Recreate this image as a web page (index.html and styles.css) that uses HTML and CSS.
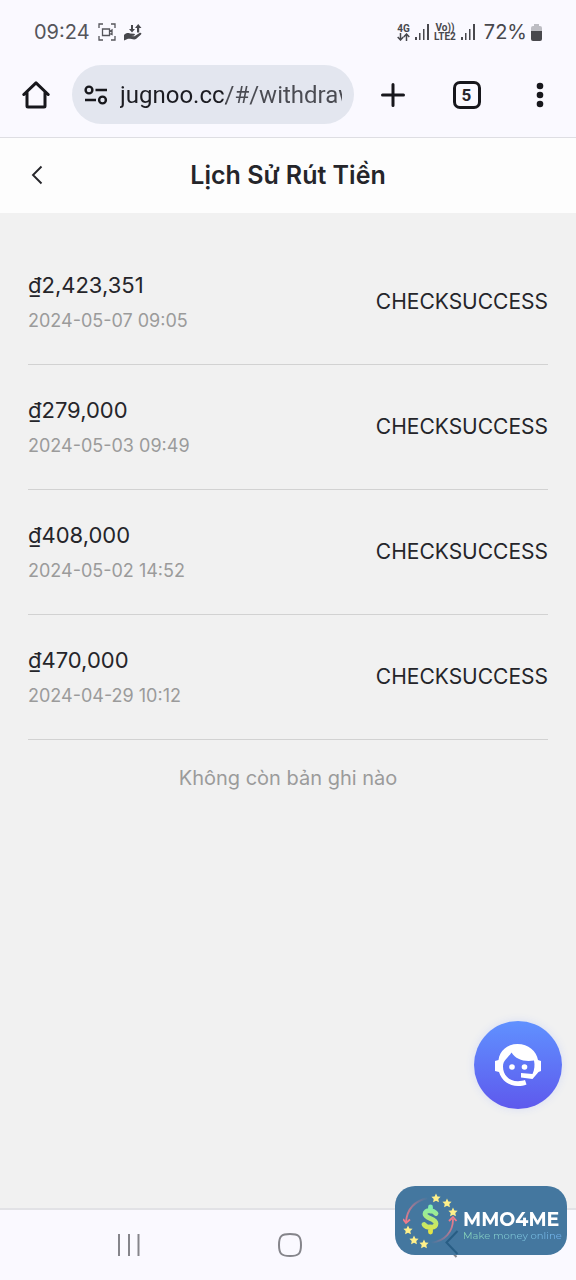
FILE: index.html
```html
<!DOCTYPE html>
<html lang="vi">
<head>
<meta charset="utf-8">
<meta name="viewport" content="width=device-width, initial-scale=1">
<title>Lịch Sử Rút Tiền</title>
<link rel="stylesheet" href="styles.css">
</head>
<body>
<div class="screen">
  <div class="status">
    <div class="status-group">
      <span class="clock">09:24</span>
      <svg class="status-icon" width="18" height="18" viewBox="0 0 18 18" fill="none" stroke="#55555b" stroke-width="1.3">
        <path d="M1 5V1h4M13 1h4v4M17 13v4h-4M5 17H1v-4"/>
        <path d="M4.500 6h7v6.500h-7zM11.500 8.500l2.500-1.500v4.500L11.500 10.500"/>
      </svg>
      <svg class="status-icon" width="18" height="18" viewBox="0 0 18 18" fill="#48484d">
        <path d="M7 2h2v4h2L8 9.500 5 6h2zM13 9.500V5h-2l3.200-4L17.500 5h-2.300v4.500z"/>
        <path d="M0 12c2-2 4-2.500 6-1.500l4 .3c1.500.2 1 1.700-.3 1.900L7 13l3.500.3L15.500 10c1.500-.7 2.500.5 1.500 1.500L12 16c-2 1.200-5-.5-8-.2l-4 1.700z"/>
      </svg>
    </div>
    <div class="status-group status-right">
      <span class="net">4G
        <svg width="13" height="8" viewBox="0 0 13 8" fill="none" stroke="#48484d" stroke-width="1.500"><path d="M3.500 0v6.800M.7 4l2.800 3 2.800-3M9.500 8V1.200M6.700 4l2.800-3 2.800 3"/></svg>
      </span>
      <svg width="16" height="16" viewBox="0 0 16 16" fill="#48484d"><path d="M1 13h2v3H1zM5 9h1.500v7H5zM9 5h1.500v11H9zM13 0h2v16h-2z"/></svg>
      <span class="net"><span>Vo))</span><span>LTE2</span></span>
      <svg width="16" height="16" viewBox="0 0 16 16" fill="#48484d"><path d="M1 13h2v3H1zM5 9h1.500v7H5zM9 5h1.500v11H9zM13 0h2v16h-2z"/></svg>
      <span class="percent">72%</span>
      <svg width="11" height="17" viewBox="0 0 11 17"><path d="M3 0h5v2h1q2 0 2 2v3H0V4q0-2 2-2h1z" fill="#bdbdc3"/><path d="M0 7h11v8q0 2-2 2H2q-2 0-2-2z" fill="#48484d"/></svg>
    </div>
  </div>

  <div class="toolbar">
    <button class="tool" type="button" aria-label="Home">
      <svg width="28" height="28" viewBox="0 0 28 28" fill="none" stroke="#17171c" stroke-width="3" stroke-linejoin="round" stroke-linecap="round"><path d="M1.800 13.500 14 1.800l12.200 11.700M5 11v14q0 1 1 1h16q1 0 1-1V11"/></svg>
    </button>
    <label class="address">
      <svg class="tune" width="24" height="20" viewBox="0 0 24 20" fill="none" stroke="#17171c" stroke-width="2.400"><circle cx="5" cy="5" r="3.400"/><path d="M11.500 5H23M1 15h11"/><circle cx="18.500" cy="15" r="3.400"/></svg>
      <input class="url" type="text" aria-label="URL" value="jugnoo.cc/#/withdraw">
    </label>
    <div class="actions">
      <button class="tool" type="button" aria-label="New tab">
        <svg width="24" height="24" viewBox="0 0 24 24" stroke="#17171c" stroke-width="3" stroke-linecap="round"><path d="M12 1.500v21M1.500 12h21"/></svg>
      </button>
      <button class="tool tabs" type="button" aria-label="Tabs">5</button>
      <button class="tool" type="button" aria-label="Menu">
        <svg width="8" height="26" viewBox="0 0 8 26" fill="#17171c"><circle cx="4" cy="4" r="3.300"/><circle cx="4" cy="13" r="3.300"/><circle cx="4" cy="22" r="3.300"/></svg>
      </button>
    </div>
  </div>

  <header class="header">
    <button class="back" type="button" aria-label="Back">
      <svg width="12" height="20" viewBox="0 0 12 20" fill="none" stroke="#25252a" stroke-width="1.900"><path d="M10.500 1.500 2 10l8.500 8.500"/></svg>
    </button>
    <h1 class="title">Lịch Sử Rút Tiền</h1>
  </header>

  <main class="content">
    <ul class="records">
      <li class="record"><div class="details"><span class="amount">₫2,423,351</span><time class="date">2024-05-07 09:05</time></div><span class="state">CHECKSUCCESS</span></li>
      <li class="record"><div class="details"><span class="amount">₫279,000</span><time class="date">2024-05-03 09:49</time></div><span class="state">CHECKSUCCESS</span></li>
      <li class="record"><div class="details"><span class="amount">₫408,000</span><time class="date">2024-05-02 14:52</time></div><span class="state">CHECKSUCCESS</span></li>
      <li class="record"><div class="details"><span class="amount">₫470,000</span><time class="date">2024-04-29 10:12</time></div><span class="state">CHECKSUCCESS</span></li>
    </ul>
    <p class="empty">Không còn bản ghi nào</p>
  </main>

  <nav class="navbar">
    <button class="nav" type="button" aria-label="Recent apps">
      <svg width="24" height="24" viewBox="0 0 24 24" stroke="#85858b" stroke-width="2"><path d="M2 1v22M12 1v22M21.500 1v22"/></svg>
    </button>
    <button class="nav" type="button" aria-label="Home screen">
      <svg width="26" height="26" viewBox="0 0 26 26" fill="none" stroke="#85858b" stroke-width="2"><path d="M13 2c8.500 0 11 2 11 11s-2.500 11-11 11S2 22 2 13 4.500 2 13 2z"/></svg>
    </button>
    <button class="nav" type="button" aria-label="Go back">
      <svg width="14" height="25" viewBox="0 0 14 25" fill="none" stroke="#85858b" stroke-width="2"><path d="M12.500 1 1.500 12.500l11 11.500"/></svg>
    </button>
  </nav>
</div>

<button class="support" type="button" aria-label="Support">
  <svg width="48" height="44" viewBox="0 0 48 44">
    <path d="M23.500 1C13 1 5.500 8 4.500 17L1 18v10l4 1c2.500 8.500 10 14 19 14 3 0 6-.5 8.500-1.500L31 37c-2 .7-4.500 1.200-7 1.200C14.500 38.200 9 31.500 9 23.500c0-6.500 5-8.500 8.500-14C22 16.500 30 19 40 17.500c1 4.500.5 9-1.500 13.500L27 30v4.500l11.500 1.500 6-7L47 28V18l-3-1C42.500 8 34.500 1 23.500 1z" fill="#fff"/>
    <circle cx="18" cy="24" r="2.800" fill="#fff"/><circle cx="30.500" cy="24" r="2.800" fill="#fff"/>
  </svg>
</button>

<a class="badge" href="#">
  <svg class="badge-logo" width="56" height="56" viewBox="0 0 56 56">
    <defs>
      <linearGradient id="dollar" gradientUnits="userSpaceOnUse" x1="0" y1="12" x2="0" y2="40"><stop offset="0" stop-color="#7df0b6"/><stop offset="1" stop-color="#e6e342"/></linearGradient>
      <linearGradient id="arc-left" x1="1" y1="0" x2="0" y2="1"><stop offset="0" stop-color="#e87a8b" stop-opacity="0"/><stop offset="1" stop-color="#f07c8b"/></linearGradient>
      <linearGradient id="arc-right" x1="0" y1="1" x2="1" y2="0"><stop offset="0" stop-color="#e87a8b" stop-opacity="0"/><stop offset="1" stop-color="#f07c8b"/></linearGradient>
      <path id="star" d="m0-4.500 1.400 2.900 3.200.4-2.300 2.200.6 3.200L0 2.700l-2.900 1.500.6-3.200-2.300-2.200 3.200-.4z" fill="#fff08a"/>
    </defs>
    <g fill="none" stroke-width="1.800">
      <path d="M25 5C11 8 4 17 3 29" stroke="url(#arc-left)"/><path d="m0 26 3 4 4-3.500" stroke="#f07c8b"/>
      <path d="M28 50C42 48 50 39 50 26" stroke="url(#arc-right)"/><path d="m46 28 4-4 3.500 4" stroke="#f07c8b"/>
    </g>
    <use href="#star" x="33" y="5"/><use href="#star" x="44" y="10"/><use href="#star" x="50" y="19"/>
    <use href="#star" x="5" y="37"/><use href="#star" x="11" y="47"/><use href="#star" x="21" y="51"/>
    <path d="M33 20.500c-3-4-11-4-11 .5s11 4.500 11 9.500-9 5-12 1M27.500 14v4M27.500 34v5" fill="none" stroke="url(#dollar)" stroke-width="4.800" stroke-linecap="round"/>
  </svg>
  <span class="badge-text"><strong class="brand">MMO4ME</strong><span class="slogan">Make money online</span></span>
  <svg class="badge-chevron" width="14" height="25" viewBox="0 0 14 25" fill="none" stroke="#285d84" stroke-width="2"><path d="M12.500 1 1.500 12.500l11 11.500"/></svg>
</a>
</body>
</html>
```
FILE: styles.css
```css
* { box-sizing: border-box; }
body { margin: 0; background: #f1f1f1; color: #25252a; font-family: Inter, "Noto Sans", sans-serif; }
button { border: 0; padding: 0; background: none; color: inherit; font: inherit; display: flex; align-items: center; justify-content: center; }
svg { display: block; flex: none; }
.screen { min-height: 100vh; display: flex; flex-direction: column; }

.status { display: flex; justify-content: space-between; height: 64px; padding: 0 34px; background: #faf9ff; color: #48484d; align-items: center; }
.status-group { display: flex; align-items: center; gap: 8px; }
.status-right { gap: 4px; }
.clock, .percent { font-size: 20px; }
.clock { color: #55555b; }
.percent { padding-left: 4px; }
.net { display: flex; flex-direction: column; align-items: center; font: 700 10px/9px Roboto, sans-serif; }

.toolbar { display: flex; align-items: center; padding: 1px 20px 13px; background: #faf9ff; border-bottom: 1px solid #dedee3; }
.tool { width: 32px; height: 32px; }
.address { flex: 1; min-width: 0; display: flex; align-items: center; gap: 12px; height: 59px; margin-left: 20px; padding: 0 12px; border-radius: 30px; background: #e3e6ef; }
.url { flex: 1; min-width: 0; width: 100%; height: 40px; padding: 0; border: 0; outline: 0; font: 24px/32px Roboto, sans-serif; color: transparent; background: linear-gradient(to right, #1c1c22 106px, #4a4b52 106px); -webkit-background-clip: text; background-clip: text; }
.actions { display: flex; justify-content: space-between; width: 179px; margin-left: 23px; }
.tabs { width: 28px; height: 28px; border: 3px solid #17171c; border-radius: 7px; font: 700 17px/20px Roboto, sans-serif; margin: 2px 0; }

.header { display: grid; grid-template-columns: 44px 1fr 44px; align-items: center; height: 75px; padding: 0 15px 2px; background: #fdfdfd; }
.back { width: 44px; height: 44px; }
.title { margin: 0; text-align: center; font-size: 25px; line-height: 32px; font-weight: 600; }

.content { flex: 1; padding: 27px 28px; }
.records { margin: 0; padding: 0; list-style: none; }
.record { display: flex; align-items: center; justify-content: space-between; height: 125px; border-bottom: 1px solid #d2d2d2; }
.details { display: flex; flex-direction: column; gap: 5px; }
.amount { font-size: 22px; line-height: 32px; }
.state { font-size: 21px; line-height: 32px; }
.date { font-size: 18px; line-height: 30px; color: #9b9b9b; }
.empty { margin: 24px 0; text-align: center; font-size: 20px; line-height: 28px; color: #9b9b9b; }

.navbar { display: grid; grid-template-columns: repeat(3, 1fr); align-items: center; height: 72px; padding: 0 45px 0 49px; background: #faf9ff; border-top: 2px solid #e2e2e6; }
.nav { height: 48px; }

.support { position: fixed; right: 14px; bottom: 171px; width: 88px; height: 88px; border-radius: 50%; background: linear-gradient(#6091ff, #5e59ed); box-shadow: 0 0 8px #d5dcf5; }
.badge { position: fixed; right: 9px; bottom: 25px; display: flex; align-items: center; gap: 4px; height: 69px; width: 172px; padding: 0 8px; border-radius: 20px; background: #44779f; text-decoration: none; color: #fff; font-family: Montserrat, Inter, sans-serif; }
.badge-text { display: flex; flex-direction: column; padding-top: 10px; white-space: nowrap; }
.brand { font-size: 19px; line-height: 20px; font-weight: 700; }
.slogan { font-size: 10px; line-height: 12px; color: transparent; background: linear-gradient(to right, #8ad6b8, #6fb0ee); -webkit-background-clip: text; background-clip: text; }
.badge-chevron { position: absolute; left: 50px; bottom: 0; }
```
